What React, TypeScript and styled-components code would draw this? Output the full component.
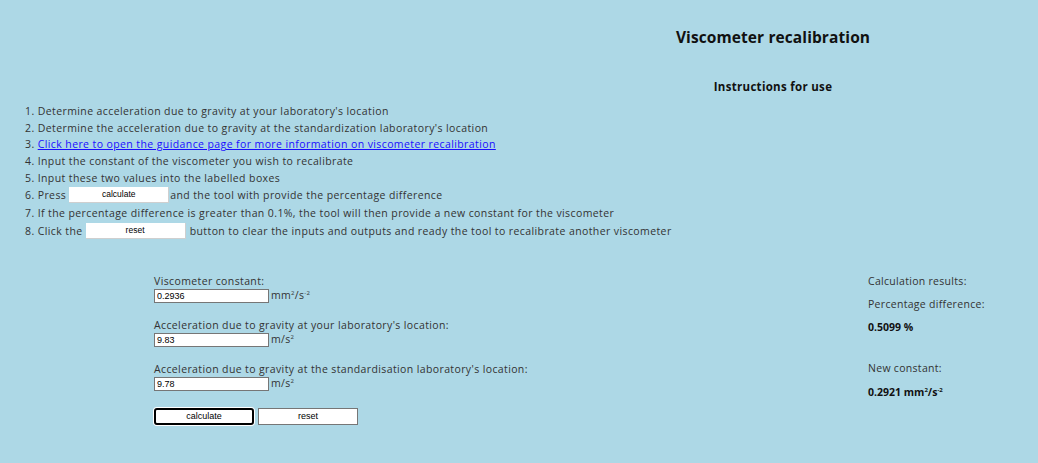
import { createGlobalStyle, styled } from "styled-components";

const GlobalStyle = createGlobalStyle`
  html, body {
    margin: 0;
    padding: 0;
    background: #add8e6;
  }
  body {
    font-family: "Open Sans", "Noto Sans", sans-serif;
    color: #333;
    width: 1038px;
    height: 463px;
    overflow: hidden;
  }
`;

const Page = styled.div`
  display: flex;
  flex-direction: column;
  padding: 0 25px;
`;

const Header = styled.header`
  display: grid;
  grid-template-columns: 508px 1fr;
  padding-top: 27px;
`;

const HeaderCol = styled.div`
  grid-column: 2;
  display: flex;
  flex-direction: column;
  align-items: center;
`;

const Title = styled.h1`
  margin: 0;
  font-size: 15.5px;
  line-height: 20px;
  font-weight: 700;
  letter-spacing: 0.1px;
  color: #111;
`;

const Subtitle = styled.h2`
  margin: 32px 0 0;
  font-size: 11.5px;
  line-height: 16px;
  font-weight: 700;
  letter-spacing: 0.3px;
  color: #111;
`;

const Steps = styled.ol`
  margin: 8px 0 0;
  padding: 0;
  list-style: none;
  font-size: 10.5px;
  letter-spacing: 0.4px;
`;

const Step = styled.li<{ $tall?: boolean }>`
  display: flex;
  align-items: center;
  height: ${(p) => (p.$tall ? "18px" : "16.6px")};
  white-space: pre;
`;

const Link = styled.a`
  color: #1a0dff;
  text-decoration: underline;
`;

const InlineButton = styled.button`
  width: 100px;
  height: 16px;
  margin: 0 1px 0 3px;
  padding: 0;
  background: #fff;
  border: none;
  border-right: 1px solid #cfcfcf;
  border-bottom: 1px solid #cfcfcf;
  font-family: "Liberation Sans", Arial, sans-serif;
  font-size: 8.5px;
  letter-spacing: 0;
  color: #000;
`;

const Main = styled.div`
  display: flex;
  justify-content: space-between;
  margin-top: 34px;
  padding-left: 129px;
  padding-right: 15px;
`;

const Form = styled.div`
  display: flex;
  flex-direction: column;
`;

const Field = styled.div`
  display: flex;
  flex-direction: column;
  margin-bottom: 15px;
`;

const Label = styled.label`
  font-size: 10.5px;
  letter-spacing: 0.38px;
  line-height: 14px;
  margin-bottom: 1px;
`;

const InputRow = styled.div`
  display: flex;
  align-items: flex-start;
`;

const Input = styled.input`
  box-sizing: border-box;
  width: 115px;
  height: 14px;
  padding: 0 2px;
  border: 1px solid #767676;
  background: #fff;
  font-family: "Liberation Sans", Arial, sans-serif;
  font-size: 9px;
  color: #000;
  outline: none;
`;

const Unit = styled.span`
  font-size: 10.5px;
  letter-spacing: 0.3px;
  line-height: 13px;
  margin-left: 2px;
  sup {
    font-size: 6px;
    vertical-align: 4px;
    line-height: 0;
  }
`;

const Buttons = styled.div`
  display: flex;
  gap: 4px;
  margin-top: 2px;
`;

const ActionButton = styled.button<{ $focused?: boolean }>`
  box-sizing: border-box;
  width: 100px;
  height: 17px;
  padding: 0;
  background: #fff;
  border: 1px solid #767676;
  border-radius: 0;
  font-family: "Liberation Sans", Arial, sans-serif;
  font-size: 9px;
  color: #000;
  ${(p) =>
    p.$focused &&
    `
    border: 2px solid #000;
    border-radius: 3px;
    box-shadow: 0 0 0 1px #fff;
  `}
`;

const Results = styled.div`
  display: flex;
  flex-direction: column;
  font-size: 10.5px;
  letter-spacing: 0.3px;
  width: 130px;
`;

const ResultLine = styled.div<{ $bold?: boolean; $gap?: number }>`
  line-height: 14px;
  margin-top: ${(p) => p.$gap ?? 0}px;
  font-weight: ${(p) => (p.$bold ? 700 : 400)};
  color: ${(p) => (p.$bold ? "#111" : "#333")};
  letter-spacing: ${(p) => (p.$bold ? "0" : "0.3px")};
  sup {
    font-size: 6px;
    vertical-align: 4px;
    line-height: 0;
  }
`;

export default function App() {
  return (
    <>
      <GlobalStyle />
      <Page>
        <Header>
          <HeaderCol>
            <Title>Viscometer recalibration</Title>
            <Subtitle>Instructions for use</Subtitle>
          </HeaderCol>
        </Header>
        <Steps>
          <Step>1. Determine acceleration due to gravity at your laboratory's location</Step>
          <Step>2. Determine the acceleration due to gravity at the standardization laboratory's location</Step>
          <Step>
            3. <Link href="#">Click here to open the guidance page for more information on viscometer recalibration</Link>
          </Step>
          <Step>4. Input the constant of the viscometer you wish to recalibrate</Step>
          <Step>5. Input these two values into the labelled boxes</Step>
          <Step $tall>
            6. Press<InlineButton>calculate</InlineButton>and the tool with provide the percentage difference
          </Step>
          <Step $tall>
            7. If the percentage difference is greater than 0.1%, the tool will then provide a new constant for the viscometer
          </Step>
          <Step $tall>
            8. Click the<InlineButton>reset</InlineButton> button to clear the inputs and outputs and ready the tool to recalibrate another viscometer
          </Step>
        </Steps>
        <Main>
          <Form>
            <Field>
              <Label>Viscometer constant:</Label>
              <InputRow>
                <Input defaultValue="0.2936" />
                <Unit>
                  mm<sup>2</sup>/s<sup>-2</sup>
                </Unit>
              </InputRow>
            </Field>
            <Field>
              <Label>Acceleration due to gravity at your laboratory's location:</Label>
              <InputRow>
                <Input defaultValue="9.83" />
                <Unit>
                  m/s<sup>2</sup>
                </Unit>
              </InputRow>
            </Field>
            <Field>
              <Label>Acceleration due to gravity at the standardisation laboratory's location:</Label>
              <InputRow>
                <Input defaultValue="9.78" />
                <Unit>
                  m/s<sup>2</sup>
                </Unit>
              </InputRow>
            </Field>
            <Buttons>
              <ActionButton $focused>calculate</ActionButton>
              <ActionButton>reset</ActionButton>
            </Buttons>
          </Form>
          <Results>
            <ResultLine>Calculation results:</ResultLine>
            <ResultLine $gap={9}>Percentage difference:</ResultLine>
            <ResultLine $bold $gap={9}>0.5099 %</ResultLine>
            <ResultLine $gap={27}>New constant:</ResultLine>
            <ResultLine $bold $gap={10}>
              0.2921 mm<sup>2</sup>/s<sup>-2</sup>
            </ResultLine>
          </Results>
        </Main>
      </Page>
    </>
  );
}
